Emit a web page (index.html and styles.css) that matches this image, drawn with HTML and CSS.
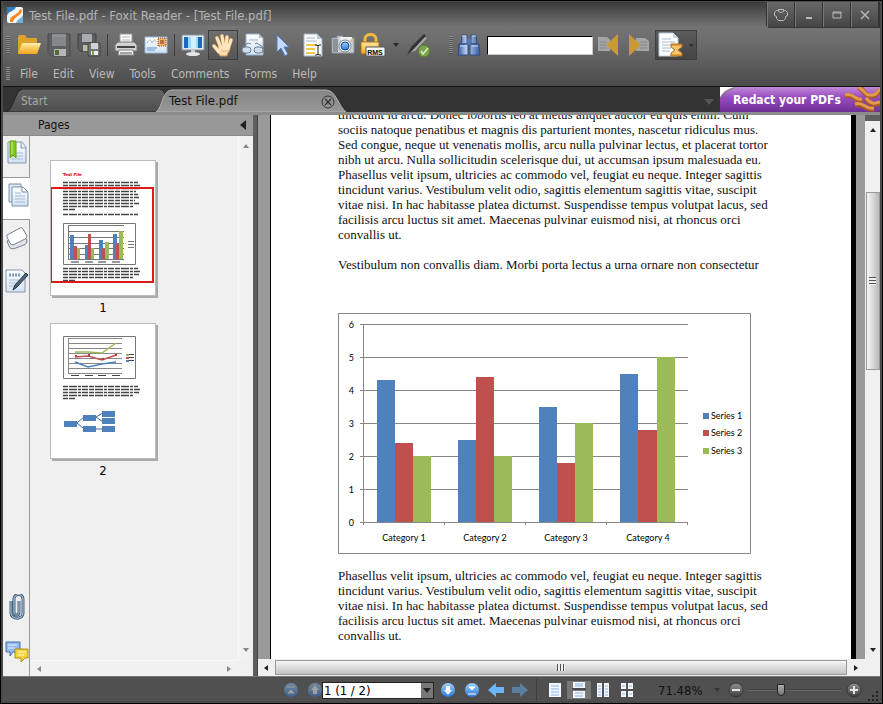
FILE: index.html
```html
<!DOCTYPE html>
<html lang="en">
<head>
  <meta charset="UTF-8">
  <title>Test File.pdf - Foxit Reader</title>
  <link rel="stylesheet" href="styles.css">
</head>
<body>

  <!-- shared gradients -->
  <svg class="defs" width="0" height="0" aria-hidden="true">
    <defs>
      <linearGradient id="gold" x1="0" y1="0" x2="0" y2="1"><stop offset="0" stop-color="#ffe9a0"/><stop offset="1" stop-color="#f0a81c"/></linearGradient>
      <linearGradient id="blue" x1="0" y1="0" x2="0" y2="1"><stop offset="0" stop-color="#9fd0fb"/><stop offset="1" stop-color="#2878d8"/></linearGradient>
      <linearGradient id="sheet" x1="0" y1="0" x2="0" y2="1"><stop offset="0" stop-color="#ffffff"/><stop offset="1" stop-color="#d3e2f2"/></linearGradient>
      <linearGradient id="steel" x1="0" y1="0" x2="1" y2="0"><stop offset="0" stop-color="#35589a"/><stop offset="0.4" stop-color="#bdd5f7"/><stop offset="1" stop-color="#36599c"/></linearGradient>
      <linearGradient id="tab" x1="0" y1="0" x2="0" y2="1"><stop offset="0" stop-color="#858585"/><stop offset="1" stop-color="#989898"/></linearGradient>
      <linearGradient id="tabOff" x1="0" y1="0" x2="0" y2="1"><stop offset="0" stop-color="#646464"/><stop offset="1" stop-color="#4e4e4e"/></linearGradient>
      <linearGradient id="knob" x1="0" y1="0" x2="0" y2="1"><stop offset="0" stop-color="#909090"/><stop offset="0.5" stop-color="#686868"/><stop offset="1" stop-color="#3c3c3c"/></linearGradient>
    </defs>
  </svg>

  <div class="window">
    <header class="top">
      <div class="titlebar">
        <svg width="16" height="16" viewBox="0 0 16 16"><rect width="16" height="16" rx="2" fill="#f5f6f8"/><path d="M0 0h9C8 4 1 4 0 9z" fill="#2f7fc0"/><path d="M3 13c0-5 9-5 10-11l2 1c0 6-8 6-9 12H3z" fill="#f38a1e"/><path d="M9 16c1-4 5-4 7-8v8z" fill="#75afd8"/></svg>
        <h1>Test File.pdf - Foxit Reader - [Test File.pdf]</h1>
        <div class="window-btns">
          <button aria-label="Skin"><svg width="14" height="12" viewBox="0 0 14 12"><path d="M4.500 .5h5l1 1h1l2 2v3l-2 1v2l-2 2h-5l-2-2v-2l-2-1v-3l2-2h1zM4.500 .5v2l2 1h1l2-1v-2" fill="none" stroke="#bbb"/></svg></button>
          <button aria-label="Minimize"><svg width="14" height="12"><path d="M4 9h6" stroke="#bbb" stroke-width="2"/></svg></button>
          <button aria-label="Maximize"><svg width="14" height="12"><path d="M3 3h8v6H3zM3 4h8" fill="none" stroke="#bbb"/></svg></button>
          <button aria-label="Close"><svg width="14" height="12"><path d="M3 2l8 8M11 2l-8 8" stroke="#bbb" stroke-width="1.3"/></svg></button>
        </div>
      </div>

      <div class="toolbar">
        <span class="grip"></span>
        <button aria-label="Open"><svg width="24" height="24" viewBox="0 0 24 24"><path d="M1 21V4l1-2h6l2 3h10v6z" fill="#dca32b"/><path d="M1 21L5 10h19l-4 11z" fill="url(#gold)"/><path d="M6 11h17" stroke="#fff1ba"/></svg></button>
        <button aria-label="Save"><svg width="24" height="24" viewBox="0 0 24 24"><path d="M1 1h22v22H4l-3-3z" fill="#5d5f61" stroke="#494b4d"/><path d="M5 1h14v12H5z" fill="#858789"/><path d="M5 3h14" stroke="#9b9d9f"/><path d="M7 16h12v7H7z" fill="#b5b7b5"/><path d="M8 17h4v5H8z" fill="#536b3b"/></svg></button>
        <button aria-label="Save all"><svg width="24" height="24" viewBox="0 0 24 24"><path d="M1 1h18v17H3l-2-2z" fill="#5b5d5f" stroke="#414345"/><path d="M5 1h10v8H5z" fill="#a9abad"/><path d="M6 12h8v6H6z" fill="#b9c09a"/><path d="M11 10h12v13H12l-1-1z" fill="#727476" stroke="#434547"/><path d="M14 10h7v6h-7z" fill="#d1d3d4"/><path d="M14 18h7v4h-7z" fill="#eee"/><path d="M15 18h2v4h-2z" fill="#7fa443"/></svg></button>
        <span class="sep"></span>
        <button aria-label="Print"><svg width="24" height="24" viewBox="0 0 24 24"><path d="M6 1h12v10H6z" fill="#fafafa" stroke="#999"/><path d="M8 4h8M8 7h8" stroke="#b9b9b9"/><path d="M1 12l3-3h16l3 3v6H1z" fill="#d2d2d0" stroke="#777"/><path d="M3 14h18" stroke="#444" stroke-width="2"/><path d="M5 17h14l1 5H4z" fill="#f3f3f3" stroke="#888"/><path d="M6 20h12" stroke="#555"/></svg></button>
        <button aria-label="E-mail"><svg width="24" height="24" viewBox="0 0 24 24"><path d="M1 4h22v16H1z" fill="url(#sheet)" stroke="#9bb8da"/><path d="M3 10c2-4 4-4 5 0 2-4 3-4 4-1" fill="none" stroke="#a3b9d0"/><path d="M3 15h10M3 17h8" stroke="#5e93d2"/><path d="M14 5h8v8h-8z" fill="#f9b26c" stroke="#8d4620" stroke-dasharray="1 1"/><path d="M16 7h4v4h-4z" fill="#b97042"/></svg></button>
        <span class="sep"></span>
        <button aria-label="Full screen"><svg width="24" height="24" viewBox="0 0 24 24"><path d="M1 2h22v15H1z" fill="#e6eaee" stroke="#8997a5"/><path d="M3 4h18v11H3z" fill="#176bb8"/><path d="M7 4h10v11H7z" fill="#9bd8fa"/><path d="M10 4h5v11h-5z" fill="#d3f1ff"/><path d="M10 17h4v3h-4z" fill="#c5ccd3"/><ellipse cx="12" cy="21" rx="7" ry="2" fill="#e4e6e8"/></svg></button>
        <button class="pressed" aria-label="Hand" aria-pressed="true"><svg width="24" height="24" viewBox="0 0 24 24"><path d="M3 13l5 6M6 5l4 10M11 3l2 12M16 4l-1 11M20 7l-3 9" fill="none" stroke="#c98b4d" stroke-width="4" stroke-linecap="round"/><path d="M7 13h11q2 4-1 7l-1 3H9l-2-4z" fill="#fbdcae" stroke="#c98b4d"/><path d="M3 13l5 6M6 5l4 10M11 3l2 12M16 4l-1 11M20 7l-3 9" fill="none" stroke="#fde6c2" stroke-width="3" stroke-linecap="round"/><path d="M10 17c2 2 4 2 7 0" fill="none" stroke="#e5b47c"/></svg></button>
        <button aria-label="Read mode"><svg width="24" height="24" viewBox="0 0 24 24"><path d="M5 1h13l4 4v17H5z" fill="url(#sheet)" stroke="#98afc6"/><path d="M18 1v4h4" fill="#a7c3e0"/><path d="M8 7h9" stroke="#9db6d0"/><path d="M1 15l6-5 3 1M23 15l-7-5-2 1" fill="none" stroke="#68809a"/><rect x="1" y="14" width="9" height="6" rx="3" fill="#cfddea" stroke="#66809a"/><rect x="13" y="14" width="9" height="6" rx="3" fill="#cfddea" stroke="#66809a"/></svg></button>
        <button aria-label="Select"><svg width="24" height="24" viewBox="0 0 24 24"><path d="M6 2v17l4-4 4 8 3-2-4-7h5z" fill="#c3dcff" stroke="#527cbd"/></svg></button>
        <button aria-label="Select text"><svg width="24" height="24" viewBox="0 0 24 24"><path d="M3 1h13l5 5v17H3z" fill="#fbfbfb" stroke="#a6b4c2"/><path d="M16 1v5h5z" fill="#b6c9de"/><path d="M5 5h9M5 8h11" stroke="#a9bccf"/><path d="M5 12h11M5 16h9M5 20h9" stroke="#f0ca46" stroke-width="2"/><path d="M14 12h2l1 1 1-1h2M17 13v8M14 22h2l1-1 1 1h2" fill="none" stroke="#222"/></svg></button>
        <button aria-label="Snapshot"><svg width="24" height="24" viewBox="0 0 24 24"><path d="M1 5h5V3h6v2h11v15H1z" fill="#c8ced4" stroke="#8c949c"/><path d="M2 6h5v13H2z" fill="#8c949b"/><path d="M9 4h12v3H9z" fill="#edf0f2"/><circle cx="14" cy="13" r="6" fill="#eef3f8" stroke="#86919c"/><circle cx="14" cy="13" r="4" fill="url(#blue)" stroke="#194e92"/><path d="M20 6h2v2h-2z" fill="#f3b440"/></svg></button>
        <button aria-label="RMS"><svg width="26" height="24" viewBox="0 0 26 24"><path d="M5 11V6c0-6 11-6 11 0v5" fill="none" stroke="#f3b93b" stroke-width="3"/><rect x="1" y="9" width="18" height="12" rx="1" fill="url(#gold)" stroke="#ad7318"/><path d="M6 14h19v9H6z" fill="#fff" stroke="#555"/><text x="15" y="22" class="rms">RMS</text></svg></button>
        <button class="drop" aria-label="RMS options"><svg width="6" height="4"><path d="M0 0h6l-3 4z" fill="#2b2b2b"/></svg></button>
        <button aria-label="Sign"><svg width="26" height="24" viewBox="0 0 26 24"><path d="M1 22l4-8L18 1l2 2L8 16z" fill="#333"/><path d="M5 19L19 4l2 1L9 18z" fill="#a9a9a9"/><circle cx="18" cy="18" r="6" fill="#7ca34a" stroke="#55752f"/><path d="M15 18l2 3 5-6" fill="none" stroke="#ddebd0" stroke-width="1.5"/></svg></button>
        <span class="grip second"></span>
        <label class="find" for="find" title="Find"><svg width="24" height="24" viewBox="0 0 24 24"><path d="M5 2h5v9H4zM14 2h5l1 9h-6zM2 11h9v11H1zM13 11h9l1 11H13z" fill="url(#steel)" stroke="#304c83"/><path d="M10 6h4v6h-4z" fill="#5675ad"/><path d="M5 3h4M15 3h4M3 13h6M15 13h6" stroke="#d2e1fb"/></svg></label>
        <input id="find" class="search" type="text">
        <button aria-label="Find previous"><svg width="24" height="24" viewBox="0 0 24 24"><path d="M2 4h9l3 3v11H2z" fill="#a3a6a8"/><path d="M4 9h7M4 12h6M4 15h7" stroke="#818487"/><path d="M22 1v22L10 12z" fill="#c79b32"/></svg></button>
        <button aria-label="Find next"><svg width="24" height="24" viewBox="0 0 24 24"><path d="M10 5h9l4 3v10H10z" fill="#a3a6a8"/><path d="M14 9h7M14 12h7M14 15h7" stroke="#818487"/><path d="M3 1v22l12-11z" fill="#c79b32"/></svg></button>
        <button class="pressed find-options" aria-label="Search options"><svg width="36" height="26" viewBox="0 0 36 26"><path d="M1 1h14l5 5v18H1z" fill="#fff" stroke="#b7cde4"/><path d="M15 1v5h5z" fill="#c5d8ec"/><path d="M4 7h9M4 10h13M4 13h11M4 16h9M4 19h8" stroke="#a2bad3"/><path d="M13 12h11v3l-4 3 4 3v3H13v-3l4-3-4-3z" fill="#f8c56d" stroke="#a86b1d"/><path d="M13 13h11M13 23h11" stroke="#c67c1c"/><path d="M31 12h5l-3 3z" fill="#2c2c2c"/></svg></button>
      </div>

      <nav class="menu">
        <span class="grip"></span>
        <button>File</button>
        <button>Edit</button>
        <button>View</button>
        <button>Tools</button>
        <button>Comments</button>
        <button>Forms</button>
        <button>Help</button>
      </nav>
    </header>

    <div class="tabs">
      <button class="tab start">
        <svg class="shape" viewBox="0 0 160 23" preserveAspectRatio="none"><path d="M0 23C7 23 9 0 17 0h136q5 0 7 9v14z" fill="url(#tabOff)" stroke="#242424"/></svg>
        <span>Start</span>
      </button>
      <div class="tab active">
        <svg class="shape" viewBox="0 0 190 23" preserveAspectRatio="none"><path d="M0 23C7 18 6 1 16 1h154c10 0 13 17 20 22z" fill="url(#tab)" stroke="#b0b0b0"/></svg>
        <span>Test File.pdf</span>
        <button aria-label="Close tab"><svg width="14" height="14"><circle cx="7" cy="7" r="6" fill="none" stroke="#333"/><path d="M4 4l6 6M10 4l-6 6" stroke="#333" stroke-width="1.4"/></svg></button>
      </div>
      <button class="tab-list" aria-label="Tab list"><svg width="10" height="6"><path d="M0 0h10L5 6z" fill="#555"/></svg></button>
      <a class="ad" href="#">
        <svg class="swirl" width="160" height="25" viewBox="0 0 160 25"><path d="M0 0h14Q5 2 0 10z" fill="#fff"/><path d="M14 1Q5 4 1 11" fill="none" stroke="#5b8b4c"/><path d="M125 9c9-3 10 6 17 4M135 18c9-3 10 6 19 4M138 0c8 3 5 10 15 9 3 0 4-3 7-6M146 12c5 6 8 6 14 4" fill="none" stroke="#a85a1e" stroke-width="5"/><path d="M125 8c9-3 10 6 17 4M135 17c9-3 10 6 19 4M138 0c8 3 5 9 15 8 3 0 4-3 7-6M146 11c5 6 8 6 14 4" fill="none" stroke="#e39a4c" stroke-width="3"/></svg>
        <span>Redact your PDFs</span>
      </a>
    </div>

    <main class="main">
      <aside class="side">
        <div class="side-head">
          <h2>Pages</h2>
          <button aria-label="Collapse panel"><svg width="6" height="10"><path d="M6 0v10L0 5z" fill="#222"/></svg></button>
        </div>
        <div class="side-body">
          <div class="side-tabs">
            <button aria-label="Bookmarks"><svg width="22" height="26" viewBox="0 0 22 26"><path d="M2 2h14l4 5v16H2z" fill="url(#sheet)" stroke="#8297ae"/><path d="M15 2v6h5" fill="#e8f0f9" stroke="#8297ae"/><path d="M5 13h12M5 16h12M5 19h12" stroke="#a5bdd8"/><path d="M4 1h6v17l-3-3-3 3z" fill="#82c91e" stroke="#63a30e"/><path d="M6 2v12" stroke="#c4f17c"/></svg></button>
            <button class="selected" aria-label="Pages"><svg width="22" height="26" viewBox="0 0 22 26"><path d="M2 2h12v18H2z" fill="#dce8f4" stroke="#7890aa"/><path d="M5 5h11l5 5v14H5z" fill="url(#sheet)" stroke="#7890aa"/><path d="M15 5v5h5" fill="#fff" stroke="#7890aa"/><path d="M8 11h6M8 14h10M8 17h10M8 20h10" stroke="#a0bbd9"/></svg></button>
            <button aria-label="Layers"><svg width="22" height="26" viewBox="0 0 22 26"><path d="M1 16l14-7q3-1 4 2l2 5q0 3-3 4L7 24q-3 0-4-3z" fill="#dfe3e7" stroke="#75828f"/><path d="M1 10L14 3q2-1 3 1l4 7q0 2-2 3L7 20q-2 0-3-2L1 12z" fill="#fff" stroke="#75828f"/></svg></button>
            <button aria-label="Signatures"><svg width="24" height="26" viewBox="0 0 24 26"><path d="M1 2h16l3 3v19H1z" fill="url(#sheet)" stroke="#8297ae"/><path d="M4 7h11" stroke="#7e9dbe" stroke-width="3" stroke-dasharray="2 1"/><path d="M4 12h10M4 15h8M4 18h7" stroke="#a5bdd8"/><path d="M8 22l2-5L21 5l2 2-11 12z" fill="#53687f" stroke="#1f2e3e"/></svg></button>
            <button class="attach" aria-label="Attachments"><svg width="16" height="26" viewBox="0 0 16 26"><path d="M2 7v12c0 7 12 7 12 0V5c0-6-9-6-9 0v13c0 4 5 4 5 0V7" fill="none" stroke="#48627e" stroke-width="3"/><path d="M2 7v12c0 7 12 7 12 0V5c0-6-9-6-9 0v13c0 4 5 4 5 0V7" fill="none" stroke="#b3cce4"/></svg></button>
            <button aria-label="Comments"><svg width="24" height="24" viewBox="0 0 24 24"><path d="M1 2h14v10H8l-3 4v-4H1z" fill="#94baf0" stroke="#3e70b5"/><path d="M3 5h9M3 8h7" stroke="#e9f3ff"/><path d="M10 9h13v9h-3l-4 4v-4h-6z" fill="#f5d33d" stroke="#b18f10"/><path d="M13 12h8M13 15h6" stroke="#fffbd0"/></svg></button>
          </div>

          <div class="thumbs">
            <div class="thumb-list">
              <figure class="thumb">
                <svg width="104" height="134" viewBox="0 0 104 134">
                  <text x="12" y="15" class="thumb-title">Test File</text>
                  <path class="thumb-text" d="M12 21.500h75M12 24.500h77M12 27.500h76M12 30.500h73M12 33.500h75M12 36.500h76M12 39.500h72M12 42.500h76M12 45.500h70M12 48.500h12M12 53.500h75M12 107.500h75M12 110.500h77M12 113.500h76M12 116.500h71M12 119.500h12"/>
                  <path d="M12.500 62.500h72v41h-72z" fill="#fff" stroke="#777"/>
                  <path d="M17 64.500h56M17 70.500h56M17 76.500h56M17 82.500h56M17 87.500h56M17 93.500h56M17 98.500h56M17.500 64v34M77 80.500h6M77 83.500h6M77 86.500h6" stroke="#777"/>
                  <path d="M19 74h4v24h-4zM34 84h4v14h-4zM48 79h4v19h-4zM62 73h4v25h-4z" fill="#4f81bd"/>
                  <path d="M23 85h3v13h-3zM37 73h3v25h-3zM51 88h3v10h-3zM65 83h3v15h-3z" fill="#c0504d"/>
                  <path d="M26 87h3v11h-3zM40 87h3v11h-3zM54 81h4v17h-4zM68 70h4v28h-4z" fill="#9bbb59"/>
                  <path d="M20 101h8M34 101h8M47 101h8M61 101h8" stroke="#333"/>
                  <path d="M0 27h102v94H0z" fill="none" stroke="#e01a1a" stroke-width="2"/>
                </svg>
                <figcaption>1</figcaption>
              </figure>
              <figure class="thumb">
                <svg width="104" height="134" viewBox="0 0 104 134">
                  <path d="M12.500 12.500h72v42h-72z" fill="#fff" stroke="#777"/>
                  <path d="M17 14.500h54M17 19.500h54M17 24.500h54M17 29.500h54M17 34.500h54M17 39.500h54M17 44.500h54M17 49.500h54M17.500 14v35" stroke="#888"/>
                  <path d="M24 28h13l14 1 14-10" fill="none" stroke="#9bbb59" stroke-width="1.5"/>
                  <path d="M24 33l13-1 14 4 14-5" fill="none" stroke="#c0504d" stroke-width="1.5"/>
                  <path d="M24 38l13 5 14-3 14-2" fill="none" stroke="#4f81bd" stroke-width="1.5"/>
                  <path d="M24 31h2v2h-2zM37 30h2v2h-2zM51 34h2v2h-2zM64 30h2v2h-2z" fill="#d03030"/>
                  <path d="M77 30.500h6M77 33.500h6M77 36.500h6M20 51.500h8M34 51.500h8M47 51.500h8M61 51.500h8" stroke="#444"/>
                  <path d="M75 30h3v2h-3z" fill="#9bbb59"/><path d="M75 33h3v2h-3z" fill="#c0504d"/><path d="M75 36h3v2h-3z" fill="#4f81bd"/>
                  <path class="thumb-text" d="M12 62.500h75M12 65.500h77M12 68.500h76M12 71.500h71M12 74.500h12"/>
                  <path d="M26 99l7-6M26 99l7 6M45 93l7-4M45 93l7 5M45 105h7" stroke="#3e68a0"/>
                  <path d="M13 97h13v6H13zM32 91h13v6H32zM32 102h13v6H32zM51 87h13v6H51zM51 94h13v6H51zM51 102h13v6H51z" fill="#4f81bd"/>
                </svg>
                <figcaption>2</figcaption>
              </figure>
            </div>
            <div class="thumbs-vbar">
              <svg width="6" height="4"><path d="M0 4h6L3 0z" fill="#888"/></svg>
              <svg width="6" height="4"><path d="M0 0h6L3 4z" fill="#888"/></svg>
            </div>
            <div class="thumbs-hbar">
              <svg width="4" height="6"><path d="M4 0v6L0 3z" fill="#888"/></svg>
              <svg width="4" height="6"><path d="M0 0v6l4-3z" fill="#888"/></svg>
            </div>
          </div>
        </div>
      </aside>

      <section class="doc">
        <div class="canvas">
          <article class="page">
            <p>tincidunt id arcu. Donec lobortis leo at metus aliquet auctor eu quis enim. Cum<br>
            sociis natoque penatibus et magnis dis parturient montes, nascetur ridiculus mus.<br>
            Sed congue, neque ut venenatis mollis, arcu nulla pulvinar lectus, et placerat tortor<br>
            nibh ut arcu. Nulla sollicitudin scelerisque dui, ut accumsan ipsum malesuada eu.<br>
            Phasellus velit ipsum, ultricies ac commodo vel, feugiat eu neque. Integer sagittis<br>
            tincidunt varius. Vestibulum velit odio, sagittis elementum sagittis vitae, suscipit<br>
            vitae nisi. In hac habitasse platea dictumst. Suspendisse tempus volutpat lacus, sed<br>
            facilisis arcu luctus sit amet. Maecenas pulvinar euismod nisi, at rhoncus orci<br>
            convallis ut.</p>
            <p>Vestibulum non convallis diam. Morbi porta lectus a urna ornare non consectetur</p>
            <svg class="chart" width="413" height="241" viewBox="0 0 413 241" role="img" aria-label="Series by category">
              <path d="M0.5 0.5h412v240H0.5z" fill="#fff" stroke="#868686"/>
              <path d="M22 11.5h328M22 44.5h328M22 77.5h328M22 110.5h328M22 143.5h328M22 176.5h328M22 209.5h328M25.5 11v201M106.5 209v3M187.5 209v3M268.5 209v3M349.5 209v3" stroke="#868686"/>
              <g fill="#4f81bd"><path d="M39 67h18v142H39zM120 127h18v82h-18zM201 94h18v115h-18zM282 61h18v148h-18zM365 100h6v6h-6z"/></g>
              <g fill="#c0504d"><path d="M57 130h18v79H57zM138 64h18v145h-18zM219 150h18v59h-18zM300 117h19v92h-19zM365 117h6v6h-6z"/></g>
              <g fill="#9bbb59"><path d="M75 143h18v66H75zM156 143h18v66h-18zM237 110h18v99h-18zM319 44h18v165h-18zM365 135h6v6h-6z"/></g>
              <g class="axis-y">
                <text x="16" y="15">6</text>
                <text x="16" y="48">5</text>
                <text x="16" y="81">4</text>
                <text x="16" y="114">3</text>
                <text x="16" y="147">2</text>
                <text x="16" y="180">1</text>
                <text x="16" y="213">0</text>
              </g>
              <g class="axis-x">
                <text x="66" y="228">Category 1</text>
                <text x="147" y="228">Category 2</text>
                <text x="228" y="228">Category 3</text>
                <text x="310" y="228">Category 4</text>
              </g>
              <text x="373" y="106">Series 1</text>
              <text x="373" y="123">Series 2</text>
              <text x="373" y="141">Series 3</text>
            </svg>
            <p>Phasellus velit ipsum, ultricies ac commodo vel, feugiat eu neque. Integer sagittis<br>
            tincidunt varius. Vestibulum velit odio, sagittis elementum sagittis vitae, suscipit<br>
            vitae nisi. In hac habitasse platea dictumst. Suspendisse tempus volutpat lacus, sed<br>
            facilisis arcu luctus sit amet. Maecenas pulvinar euismod nisi, at rhoncus orci<br>
            convallis ut.</p>
          </article>
        </div>
        <div class="vbar">
          <svg width="6" height="4"><path d="M0 4h6L3 0z" fill="#222"/></svg>
          <span class="vthumb"></span>
          <svg width="6" height="4"><path d="M0 0h6L3 4z" fill="#222"/></svg>
        </div>
        <div class="hbar">
          <svg width="4" height="6"><path d="M4 0v6L0 3z" fill="#222"/></svg>
          <span class="hthumb"></span>
          <svg width="4" height="6"><path d="M0 0v6l4-3z" fill="#222"/></svg>
        </div>
        <div class="corner"></div>
      </section>
    </main>

    <footer class="status">
      <button class="off" aria-label="First page"><svg width="16" height="16"><circle cx="8" cy="8" r="7" fill="url(#blue)"/><path d="M4 5h8M5 11l3-3 3 3z" fill="#fff" stroke="#fff"/></svg></button>
      <button class="off" aria-label="Previous page"><svg width="16" height="16"><circle cx="8" cy="8" r="7" fill="url(#blue)"/><path d="M8 3l4 5h-2v4H6V8H4z" fill="#fff"/></svg></button>
      <label class="page-no"><select aria-label="Page"><option>1 (1 / 2)</option><option>2 (2 / 2)</option></select><svg width="12" height="14"><path d="M2 5h8l-4 5z" fill="#222"/></svg></label>
      <button aria-label="Next page"><svg width="16" height="16"><circle cx="8" cy="8" r="7" fill="url(#blue)"/><path d="M8 13l4-5h-2V4H6v4H4z" fill="#fff"/></svg></button>
      <button aria-label="Last page"><svg width="16" height="16"><circle cx="8" cy="8" r="7" fill="url(#blue)"/><path d="M4 12h8M5 5l3 3 3-3z" fill="#fff" stroke="#fff"/></svg></button>
      <button aria-label="Back"><svg width="16" height="16"><path d="M0 8l8-7v4h8v6H8v4z" fill="#6cb6fb"/></svg></button>
      <button class="off" aria-label="Forward"><svg width="16" height="16"><path d="M16 8L8 1v4H0v6h8v4z" fill="#6cb6fb"/></svg></button>
      <span class="sep"></span>
      <div class="views">
        <button aria-label="Single page"><svg width="14" height="14"><path d="M1 0h12v14H1z" fill="#f2f8ff"/><path d="M3 3h8M3 6h8M3 9h8M3 12h8" stroke="#8ab1e0"/></svg></button>
        <button class="on" aria-label="Continuous"><svg width="14" height="16"><path d="M1 0h12v6H1zM1 9h12v7H1z" fill="#f2f8ff"/><path d="M3 2h8M3 4h8M3 11h8M3 14h8" stroke="#8ab1e0"/><path d="M0 7h14" stroke="#222"/></svg></button>
        <button aria-label="Facing"><svg width="14" height="14"><path d="M1 0h5v14H1zM8 0h5v14H8z" fill="#f2f8ff"/><path d="M2 3h3M2 6h3M2 9h3M2 12h3M9 3h3M9 6h3M9 9h3M9 12h3" stroke="#8ab1e0"/></svg></button>
        <button aria-label="Continuous facing"><svg width="14" height="14"><path d="M1 0h5v6H1zM8 0h5v6H8zM1 8h5v6H1zM8 8h5v6H8z" fill="#f2f8ff"/><path d="M2 3h3M9 3h3M2 11h3M9 11h3" stroke="#8ab1e0"/></svg></button>
      </div>
      <output class="zoom">71.48%</output>
      <button class="drop" aria-label="Zoom list"><svg width="6" height="4"><path d="M0 0h6L3 4z" fill="#333"/></svg></button>
      <button aria-label="Zoom out"><svg width="16" height="16"><circle cx="8" cy="8" r="7" fill="url(#knob)" stroke="#363636"/><path d="M4 8h8" stroke="#e6e6e6" stroke-width="2"/></svg></button>
      <input class="slider" type="range" min="0" max="100" value="34" aria-label="Zoom">
      <button aria-label="Zoom in"><svg width="16" height="16"><circle cx="8" cy="8" r="7" fill="url(#knob)" stroke="#363636"/><path d="M4 8h8M8 4v8" stroke="#e6e6e6" stroke-width="2"/></svg></button>
      <svg class="resize" width="12" height="12"><path d="M8 2h2v2H8zM4 6h2v2H4zM8 6h2v2H8zM0 10h2v2H0zM4 10h2v2H4zM8 10h2v2H8z" fill="#222"/></svg>
    </footer>
  </div>

</body>
</html>
```
FILE: styles.css
```css
* {
  box-sizing: border-box;
}

body {
  margin: 0;
  background: #000;
  font-family: "DejaVu Sans Condensed", "DejaVu Sans", sans-serif;
  font-size: 12px;
}

h1, h2, p, figure {
  margin: 0;
}

button {
  display: flex;
  align-items: center;
  justify-content: center;
  padding: 0;
  border: none;
  background: none;
  color: inherit;
  font: inherit;
}

svg {
  display: block;
  flex: none;
}

.defs {
  position: absolute;
}

.window {
  display: flex;
  flex-direction: column;
  height: 100vh;
  padding: 1px 2px 2px;
  border: 1px solid #000;
  background: #4a4a4a;
}

/* title, toolbar and menu share one gradient */
.top {
  height: 85px;
  background: linear-gradient(#3b3b3d, #747474 30%, #6b6b6b 50%, #4b4b4b);
  border-bottom: 1px solid #111;
}

.titlebar {
  display: flex;
  align-items: center;
  height: 26px;
  padding-left: 4px;
}

.titlebar h1 {
  flex: 1;
  padding-left: 6px;
  font-size: 13px;
  font-weight: normal;
  color: #b4b4b4;
}

.window-btns {
  display: flex;
  align-self: stretch;
  border: 1px solid #333;
  border-top: none;
  border-radius: 0 0 0 4px;
}

.window-btns button {
  width: 28px;
  border-left: 1px solid #777;
  border-right: 1px solid #333;
  background: linear-gradient(#686868, #454545);
}

.toolbar {
  display: flex;
  align-items: center;
  height: 34px;
  padding-left: 3px;
}

.toolbar button {
  height: 30px;
  width: 30px;
}

.toolbar .drop {
  width: 12px;
  margin: 0 2px;
}

.grip {
  width: 4px;
  height: 18px;
  margin-right: 4px;
  background: repeating-linear-gradient(#8a8a8a 0 1px, #555 1px 2px);
}

.grip.second {
  margin: 0 4px 0 15px;
}

.sep {
  width: 1px;
  height: 22px;
  margin: 0 3px;
  background: #3d3d3d;
}

.toolbar .pressed {
  border: 1px solid #3e3e3e;
  background: linear-gradient(#6f6f6f, #555);
}

.toolbar .find-options {
  width: 42px;
  margin-left: 2px;
  background: linear-gradient(#5c5c5c, #444);
}

.rms {
  font: bold 7px "Liberation Sans", sans-serif;
  text-anchor: middle;
}

.find {
  margin-right: 6px;
}

.search {
  width: 106px;
  height: 19px;
  border: 1px solid #000;
  border-right-color: #ccc;
  border-bottom-color: #ccc;
  background: #fff;
}

.menu {
  display: flex;
  align-items: center;
  height: 24px;
  padding-left: 3px;
  color: #bababa;
}

.menu .grip {
  height: 14px;
  margin-right: 3px;
}

.menu button {
  padding: 0 8px 0 7px;
}

/* tabs */
.tabs {
  display: flex;
  align-items: flex-end;
  height: 25px;
  background: #333;
}

.tab {
  position: relative;
  display: flex;
  align-items: center;
  height: 23px;
}

.tab span {
  position: relative;
}

.shape {
  position: absolute;
  top: 0;
  left: 0;
  width: 100%;
  height: 100%;
}

.tab.start {
  justify-content: flex-start;
  width: 160px;
  margin-left: 3px;
  padding-left: 15px;
  color: #a8a8a8;
}

.tab.active {
  justify-content: space-between;
  width: 190px;
  margin-left: -10px;
  padding: 0 11px 0 13px;
  font-size: 13px;
  color: #111;
}

.tab.active button {
  position: relative;
  margin-top: 3px;
}

.tab-list {
  align-self: center;
  margin: 5px 6px 0 auto;
}

.ad {
  position: relative;
  display: flex;
  align-items: center;
  width: 160px;
  height: 25px;
  padding-left: 13px;
  background: linear-gradient(#c08ad8, #9a4cc0 40%, #6d2f94);
  color: #fff;
  font-weight: bold;
  text-decoration: none;
}

.ad span {
  position: relative;
}

.swirl {
  position: absolute;
  top: 0;
  left: 0;
}

/* sidebar */
.main {
  display: flex;
  flex: 1;
  min-height: 0;
  border-top: 3px solid #8c8c8c;
  background: #5e5e5e;
}

.side {
  display: flex;
  flex-direction: column;
  width: 250px;
  background: #f0f0f0;
}

.side-head {
  display: flex;
  align-items: center;
  justify-content: space-between;
  height: 21px;
  padding: 0 7px 0 35px;
  border-bottom: 1px solid #888;
  background: #989898;
}

.side-head h2 {
  font-size: 12px;
  font-weight: normal;
  color: #111;
}

.side-body {
  display: flex;
  flex: 1;
  min-height: 0;
}

.side-tabs {
  display: flex;
  flex-direction: column;
  width: 27px;
}

.side-tabs button {
  height: 43px;
  padding: 0 0 8px 2px;
  border-right: 1px solid #999;
}

.side-tabs button:first-child {
  height: 41px;
}

.side-tabs .selected {
  border: 1px solid #999;
  border-width: 1px 0;
  background: #fff;
}

.side-tabs .attach {
  flex: 1;
  height: auto;
  align-items: flex-end;
}

.side-tabs button:last-child {
  height: 48px;
  padding-bottom: 0;
}

.thumbs {
  display: grid;
  flex: 1;
  grid-template: 1fr 16px / 1fr 15px;
  min-width: 0;
}

.thumb-list {
  display: flex;
  flex-direction: column;
  gap: 6px;
  padding: 24px 0 0 20px;
  overflow: hidden;
}

.thumb {
  width: 106px;
  text-align: center;
}

.thumb svg {
  box-sizing: content-box;
  border: 1px solid #bbb;
  background: #fff;
  box-shadow: 2px 2px 0 #aaa;
}

.thumb figcaption {
  height: 21px;
  padding-top: 4px;
  font-size: 13px;
  line-height: 15px;
}

.thumb-title {
  font: bold 4px "DejaVu Sans", sans-serif;
  fill: #c00;
}

.thumb-text {
  stroke: #444;
  stroke-width: 1.5;
  stroke-dasharray: 5 1 8 1 3 1 6 1;
}

.thumbs-vbar,
.thumbs-hbar {
  display: flex;
  align-items: center;
  justify-content: space-between;
  background: #f1f1f1;
}

.thumbs-vbar {
  flex-direction: column;
  padding: 8px 0;
  border-left: 1px solid #f8f8f8;
}

.thumbs-hbar {
  padding: 0 7px;
  border-top: 1px solid #f8f8f8;
}

/* document */
.doc {
  display: grid;
  flex: 1;
  grid-template: 1fr 17px / 1fr 15px;
  min-width: 0;
  margin-left: 4px;
  border-left: 1px solid #444;
}

.canvas {
  overflow: hidden;
  padding: 0 9px 0 12px;
  background: #9a9a9a;
}

.page {
  height: 100%;
  padding: 0 0 0 67px;
  overflow: hidden;
  border: solid #000;
  border-width: 0 5px 0 1px;
  background: #fff;
  font: 13px/15px "Liberation Serif", serif;
  color: #111;
  white-space: nowrap;
}

.page p {
  margin-bottom: 15px;
}

.page p:first-child {
  margin-top: -8px;
}

.chart {
  margin: 41px 0 14px;
}

.chart text {
  font: 9px Lato, sans-serif;
  fill: #000;
}

.axis-y text {
  text-anchor: end;
}

.axis-x text {
  text-anchor: middle;
}

.vbar {
  display: flex;
  flex-direction: column;
  align-items: center;
  justify-content: space-between;
  margin-top: 6px;
  padding: 7px 0;
  background: #f0f0f0;
}

.vthumb {
  width: 14px;
  height: 178px;
  margin-bottom: 218px;
  border: 1px solid #999;
  background:
    repeating-linear-gradient(#555 0 1px, #eee 1px 3px) center / 7px 8px no-repeat,
    linear-gradient(90deg, #f6f6f6, #d8d8d8 50%, #b8b8b8);
}

.hbar {
  display: flex;
  align-items: center;
  gap: 7px;
  padding: 0 7px 0 6px;
  background: #f0f0f0;
}

.hthumb {
  flex: 1;
  height: 15px;
  border: 1px solid #999;
  background:
    repeating-linear-gradient(90deg, #555 0 1px, #eee 1px 3px) center / 8px 7px no-repeat,
    linear-gradient(#f6f6f6, #dcdcdc 50%, #c4c4c4);
}

.corner {
  background: #f0f0f0;
}

/* status bar */
.status {
  display: flex;
  align-items: center;
  height: 25px;
  padding: 2px 0 0 276px;
  border-top: 1px solid #777;
  background: #505050;
}

.status > button {
  width: 24px;
}

.status .off {
  opacity: 0.45;
}

.page-no {
  display: flex;
  width: 112px;
  height: 17px;
  margin: 0 2px 0 -5px;
  border: 1px solid #222;
  background: #777;
}

.page-no select {
  flex: 1;
  padding: 0 0 0 1px;
  border: none;
  background: #fff;
  appearance: none;
  font: inherit;
  font-size: 13px;
}

.status .sep {
  margin: 0 8px 0 4px;
}

.views {
  display: flex;
  margin-left: -2px;
}

.views button {
  width: 24px;
  height: 18px;
}

.views .on {
  background: #777;
}

.zoom {
  margin-left: 19px;
  font-size: 13px;
  color: #111;
}

.status .drop {
  width: 14px;
  margin-left: auto;
}

.slider {
  width: 94px;
  height: 16px;
  margin: 0;
  appearance: none;
  background: linear-gradient(#333, #777) center / 100% 2px no-repeat;
}

.slider::-webkit-slider-thumb {
  width: 8px;
  height: 12px;
  border: 1px solid #222;
  border-radius: 1px 1px 4px 4px;
  appearance: none;
  background: linear-gradient(#aaa, #777);
}

.resize {
  align-self: flex-end;
  margin-left: 2px;
}
```
